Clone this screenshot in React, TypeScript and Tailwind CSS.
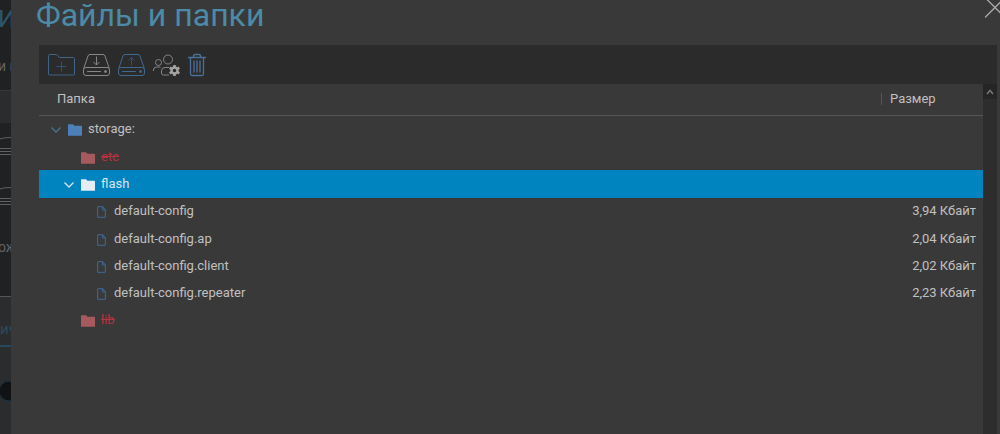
import { useState } from "react";
import type { FC, ReactNode } from "react";

type NodeKind = "root" | "locked" | "folder" | "file";

interface TreeNode {
  name: string;
  kind: NodeKind;
  level: number;
  expanded?: boolean;
  size?: string;
}

const nodes: TreeNode[] = [
  { name: "storage:", kind: "root", level: 0, expanded: true },
  { name: "etc", kind: "locked", level: 1 },
  { name: "flash", kind: "folder", level: 1, expanded: true },
  { name: "default-config", kind: "file", level: 2, size: "3,94 Кбайт" },
  { name: "default-config.ap", kind: "file", level: 2, size: "2,04 Кбайт" },
  { name: "default-config.client", kind: "file", level: 2, size: "2,02 Кбайт" },
  { name: "default-config.repeater", kind: "file", level: 2, size: "2,23 Кбайт" },
  { name: "lib", kind: "locked", level: 1 },
];

const indent = ["pl-[12px]", "pl-[25px]", "pl-[38px]"];

const NewFolderIcon = () => (
  <svg width="27" height="24" viewBox="0 0 27 24" fill="none" stroke="#3f6488">
    <path d="M.5 21V2.5q0-1 1-1h6.8q.8 0 1.3.7l1.6 2.3h14.3q1 0 1 1V21q0 1-1 1h-24q-1 0-1-1z" />
    <path d="M13.5 8.5v10M8.5 13.5h10" stroke="#2d5277" />
  </svg>
);

const DriveIcon: FC<{ color: string; arrowColor: string; up?: boolean }> = ({ color, arrowColor, up }) => (
  <svg width="27" height="24" viewBox="0 0 27 24" fill="none" stroke={color}>
    <path d="M.7 15.5 5 3q.5-1.5 2-1.5h13q1.5 0 2 1.5l4.3 12.5" />
    <rect x=".5" y="14.5" width="26" height="8" rx="2.5" />
    <path d="M4.5 18.5h13" strokeLinecap="round" />
    <circle cx="22.5" cy="18.5" r="1" fill={color} />
    <path d={up ? "M13.5 12.5v-8M10.5 7.5l3-3 3 3" : "M13.5 3.5v8.5M10.5 9l3 3 3-3"} stroke={arrowColor} />
  </svg>
);

const UsersIcon = () => (
  <svg width="27" height="24" viewBox="0 0 27 24" fill="none" stroke="#858585">
    <circle cx="15" cy="6.5" r="4.5" />
    <circle cx="5.5" cy="9.5" r="3" />
    <path d="M.5 18v-1q0-3 3-3H6q1 0 1.500.5" />
    <path d="M16 14.5h-4q-3.500 0-3.500 3.500v2q0 2 2 2H16" />
    <circle cx="21.5" cy="17.5" r="3" stroke="#a3a3a3" strokeWidth="2.4" />
    <path
      d="M21.5 12v2M21.5 21v2M16.7 14.700l1.800 1.100M24.500 19.200l1.800 1.100M16.700 20.300l1.800-1.100M24.500 15.800l1.800-1.100"
      stroke="#a3a3a3"
      strokeWidth="2.6"
    />
  </svg>
);

const TrashIcon = () => (
  <svg width="18" height="24" viewBox="0 0 18 24" fill="none" stroke="#4a7299">
    <path d="M0 4.5h18M5.5 4V3q0-1.5 1.5-1.5h4q1.5 0 1.5 1.5v1" strokeWidth="1.4" />
    <path d="M2.500 5v16q0 1.500 1.500 1.500h10q1.500 0 1.500-1.500V5M6 7.500v12M9 7.500v12M12 7.500v12" strokeWidth="1.3" />
  </svg>
);

const Chevron: FC<{ color: string }> = ({ color }) => (
  <svg width="11" height="11" viewBox="0 0 11 11" fill="none" stroke={color} strokeWidth="1.3">
    <path d="M.5 3.500L5 8l4.500-4.500" />
  </svg>
);

const FolderIcon: FC<{ color: string }> = ({ color }) => (
  <svg width="14" height="12" viewBox="0 0 14 12" fill={color}>
    <path d="M0 .8Q0 .3.5.3h4.600l1.300 1.500h7.100q.5 0 .5.500v8.900q0 .5-.5.500H.5q-.5 0-.5-.5z" />
  </svg>
);

const FileIcon = () => (
  <svg width="9" height="12" viewBox="0 0 9 12" fill="none" stroke="#3d6189" strokeWidth="1.2">
    <path d="M.6 1.500q0-.9.9-.9H5.500L8.400 4v6.500q0 .9-.9.9h-6q-.9 0-.9-.9z" />
    <path d="M5.500.6V4h2.900" />
  </svg>
);

const folderColor = { root: "#4d80b8", locked: "#a75a5e", folder: "#e4edf2" };

const ToolButton: FC<{ label: string; children: ReactNode }> = ({ label, children }) => (
  <button type="button" aria-label={label} title={label} className="cursor-pointer">
    {children}
  </button>
);

// Slice of the page that stays visible beside the dialog
const Backdrop = () => (
  <div aria-hidden="true" className="flex w-[11px] shrink-0 flex-col overflow-hidden bg-[#202123] whitespace-nowrap">
    <div className="-ml-[2px] h-[91px] shrink-0 border-b border-[#37383a]">
      <p className="h-[56px] pt-[2px] text-[24px] leading-[34px] text-[#2d566a]">И</p>
      <p className="text-[14px] leading-[20px] text-[#626365]">и п</p>
    </div>
    <div className="h-[32px] shrink-0 bg-[#2b2c2e]" />
    <svg width="11" height="110" viewBox="0 0 11 110" fill="none" stroke="#606163" className="shrink-0">
      <path d="M0 16q3-1.500 11-1.500M0 25.500h11M0 28.500h11M0 31.500h11" />
      <path d="M0 66q3-1.500 11-1.500M0 75.500h11M0 78.500h11M0 81.500h11" />
    </svg>
    <p className="-ml-[2px] h-[64px] shrink-0 border-b border-[#555658] pt-[4px] text-[14px] leading-[20px] text-[#626365]">
      ож
    </p>
    <div className="grow bg-[#2b2c2e] pt-[22px]">
      <p className="border-b-2 border-[#28485b] pb-[6px] text-[15px] leading-[20px] text-[#2b4a60]">ич</p>
      <svg width="11" height="24" viewBox="0 0 11 24" className="mt-[32px]">
        <circle cx="9" cy="12" r="10" fill="#101214" stroke="#163644" />
      </svg>
    </div>
  </div>
);

export default function App() {
  const [selected, setSelected] = useState("flash");

  return (
    <div className="flex min-h-screen bg-[#393939] font-[Roboto,sans-serif] text-[#c0c0c0]">
      <Backdrop />
      <main className="flex min-w-0 grow flex-col overflow-hidden">
        <header className="flex h-[45px] shrink-0 items-start justify-between pl-[25px]">
          <h1 className="text-[32px] leading-[30px] text-[#4c8ba7]">Файлы и папки</h1>
          <button type="button" aria-label="Закрыть" className="-mr-[6px] cursor-pointer">
            <svg width="21" height="18" viewBox="0 0 21 18" fill="none" stroke="#a9a9a9" strokeWidth="1.3">
              <path d="M0 17.500L20 -2.500M0 -2.500L20 17.500" />
            </svg>
          </button>
        </header>

        <div className="flex grow flex-col pr-[3px] pl-[28px]">
          <div role="toolbar" className="flex h-[39px] shrink-0 items-center gap-2 bg-[#2b2b2b] px-[9px]">
            <ToolButton label="Создать папку">
              <NewFolderIcon />
            </ToolButton>
            <ToolButton label="Скачать">
              <DriveIcon color="#878787" arrowColor="#878787" />
            </ToolButton>
            <ToolButton label="Загрузить">
              <DriveIcon color="#426a90" arrowColor="#2b5278" up />
            </ToolButton>
            <ToolButton label="Права доступа">
              <UsersIcon />
            </ToolButton>
            <ToolButton label="Удалить">
              <TrashIcon />
            </ToolButton>
          </div>

          <div className="flex grow">
            <div className="min-w-0 grow">
              <table className="h-[250px] w-full border-collapse text-[13px] leading-[16px]">
                <thead>
                  <tr className="h-[31px] border-b border-[#565656]">
                    <th className="pl-[18px] text-left font-normal">Папка</th>
                    <th className="w-[102px] text-left font-normal">
                      <span className="block border-l border-[#575757] pl-[8px] leading-[12px]">Размер</span>
                    </th>
                  </tr>
                </thead>
                <tbody>
                  {nodes.map((node) => {
                    const isSelected = node.name === selected;
                    return (
                      <tr
                        key={node.name}
                        onClick={() => setSelected(node.name)}
                        className={isSelected ? "bg-[#0084bf] text-[#d5e6ee]" : ""}
                      >
                        <td className={indent[node.level]}>
                          <div className="flex items-center gap-[6px]">
                            <span className="w-[11px]">
                              {node.expanded && <Chevron color={isSelected ? "#d5e6ee" : "#467391"} />}
                            </span>
                            <span className="flex w-[14px] justify-center pt-[2px]">
                              {node.kind === "file" ? <FileIcon /> : <FolderIcon color={folderColor[node.kind]} />}
                            </span>
                            <span className={node.kind === "locked" ? "text-[#b5333f] line-through" : ""}>
                              {node.name}
                            </span>
                          </div>
                        </td>
                        <td className="pr-[7px] text-right">{node.size}</td>
                      </tr>
                    );
                  })}
                </tbody>
              </table>
            </div>
            <div className="w-[14px] shrink-0 bg-[#2d2d2d]">
              <button
                type="button"
                aria-label="Вверх"
                className="flex h-[15px] w-full items-center justify-center bg-[#252525]"
              >
                <svg width="8" height="6" viewBox="0 0 8 6" fill="none" stroke="#777777" strokeWidth="1.5">
                  <path d="M1 5l3-3.500L7 5" />
                </svg>
              </button>
            </div>
          </div>
        </div>
      </main>
    </div>
  );
}
